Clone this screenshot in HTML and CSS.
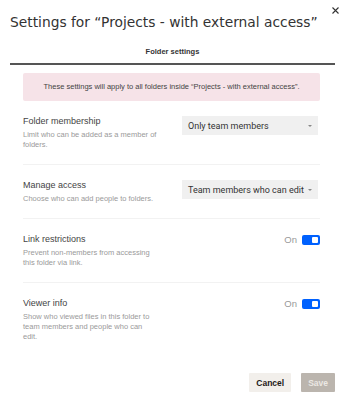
FILE: index.html
```html
<!DOCTYPE html>
<html lang="en">
<head>
    <meta charset="UTF-8">
    <meta name="viewport" content="width=device-width, initial-scale=1.0">
    <title>Folder settings</title>
    <link rel="stylesheet" href="styles.css">
</head>
<body>
    <div class="dialog">
        <button class="close" type="button" aria-label="Close">
            <svg width="7" height="7" viewBox="0 0 7 7"><path d="M0.5 0.5L6.5 6.5M6.5 0.5L0.5 6.5" stroke="#333" stroke-width="1.1" fill="none"/></svg>
        </button>
        <h1 class="title">Settings for “Projects - with external access”</h1>
        <div class="tabs">
            <span class="tab">Folder settings</span>
        </div>

        <div class="content">
            <div class="banner">These settings will apply to all folders inside “Projects - with external access”.</div>

            <div class="setting">
                <div class="info">
                    <div class="label">Folder membership</div>
                    <div class="desc">Limit who can be added as a member of folders.</div>
                </div>
                <div class="dropdown">
                    <span>Only team members</span>
                    <span class="caret"></span>
                </div>
            </div>

            <div class="setting">
                <div class="info">
                    <div class="label">Manage access</div>
                    <div class="desc">Choose who can add people to folders.</div>
                </div>
                <div class="dropdown">
                    <span>Team members who can edit</span>
                    <span class="caret"></span>
                </div>
            </div>

            <div class="setting">
                <div class="info">
                    <div class="label">Link restrictions</div>
                    <div class="desc">Prevent non-members from accessing this folder via link.</div>
                </div>
                <div class="switch">
                    <span class="state">On</span>
                    <span class="toggle"><span class="knob"></span></span>
                </div>
            </div>

            <div class="setting">
                <div class="info">
                    <div class="label">Viewer info</div>
                    <div class="desc">Show who viewed files in this folder to team members and people who can edit.</div>
                </div>
                <div class="switch">
                    <span class="state">On</span>
                    <span class="toggle"><span class="knob"></span></span>
                </div>
            </div>
        </div>

        <div class="actions">
            <button class="btn cancel" type="button">Cancel</button>
            <button class="btn save" type="button" disabled>Save</button>
        </div>
    </div>
</body>
</html>
```

FILE: styles.css
```css
body {
    margin: 0;
    font-family: "Liberation Sans", Arial, sans-serif;
    background: #fff;
    color: #333;
}
.dialog {
    position: relative;
    width: 344px;
    height: 400px;
    padding: 0 9px 0 10px;
    box-sizing: border-box;
}
.close {
    position: absolute;
    top: 7px;
    right: 5px;
    padding: 0;
    border: none;
    background: none;
    line-height: 0;
}
.title {
    margin: 0;
    padding-top: 13px;
    font-family: "DejaVu Sans", sans-serif;
    font-size: 13.8px;
    font-weight: normal;
    line-height: 18px;
    color: #333;
    white-space: nowrap;
}
.tabs {
    margin-top: 15px;
    height: 17px;
    border-bottom: 2px solid #555;
    text-align: center;
}
.tab {
    display: block;
    font-size: 7.5px;
    font-weight: bold;
    line-height: 12px;
    color: #333;
}
.content {
    padding: 8px 15px 0 13px;
}
.banner {
    height: 28px;
    background: #f6e3e8;
    border-radius: 2px;
    font-size: 7.5px;
    line-height: 28px;
    text-align: center;
    color: #444;
    white-space: nowrap;
}
.setting {
    display: flex;
    justify-content: space-between;
    align-items: flex-start;
    padding: 13px 0 14px;
    border-bottom: 1px solid #f2f2f2;
}
.setting:last-child {
    border-bottom: none;
}
.label {
    font-size: 9px;
    line-height: 14px;
    color: #444;
}
.desc {
    width: 134px;
    margin-top: 2px;
    font-size: 7.5px;
    line-height: 10px;
    color: #9a9a9a;
}
.dropdown {
    display: flex;
    align-items: center;
    justify-content: space-between;
    width: 136px;
    height: 19px;
    margin: 2px 2px 0 0;
    padding: 0 6px;
    box-sizing: border-box;
    background: #f0f0f0;
    font-family: Roboto, sans-serif;
    font-size: 9px;
    color: #333;
    white-space: nowrap;
}
.caret {
    width: 0;
    height: 0;
    border-left: 2px solid transparent;
    border-right: 2px solid transparent;
    border-top: 2px solid #888;
}
.switch {
    display: flex;
    align-items: center;
    gap: 5px;
    margin-top: 2px;
}
.state {
    font-size: 9.5px;
    color: #999;
}
.toggle {
    display: flex;
    align-items: center;
    justify-content: flex-end;
    width: 18px;
    height: 10px;
    padding: 0 2px;
    box-sizing: border-box;
    background: #0061fe;
    border-radius: 2px;
}
.knob {
    width: 6px;
    height: 6px;
    background: #fff;
    border-radius: 1px;
}
.actions {
    position: absolute;
    right: 9px;
    bottom: 8px;
    display: flex;
    gap: 10px;
}
.btn {
    height: 19px;
    padding: 0 7px;
    border: none;
    border-radius: 1px;
    font-family: "Liberation Sans", Arial, sans-serif;
    font-size: 8.5px;
    font-weight: bold;
}
.cancel {
    background: #f2efeb;
    color: #1e1919;
}
.save {
    background: #bbb5ae;
    color: #ebe8e4;
}
```
